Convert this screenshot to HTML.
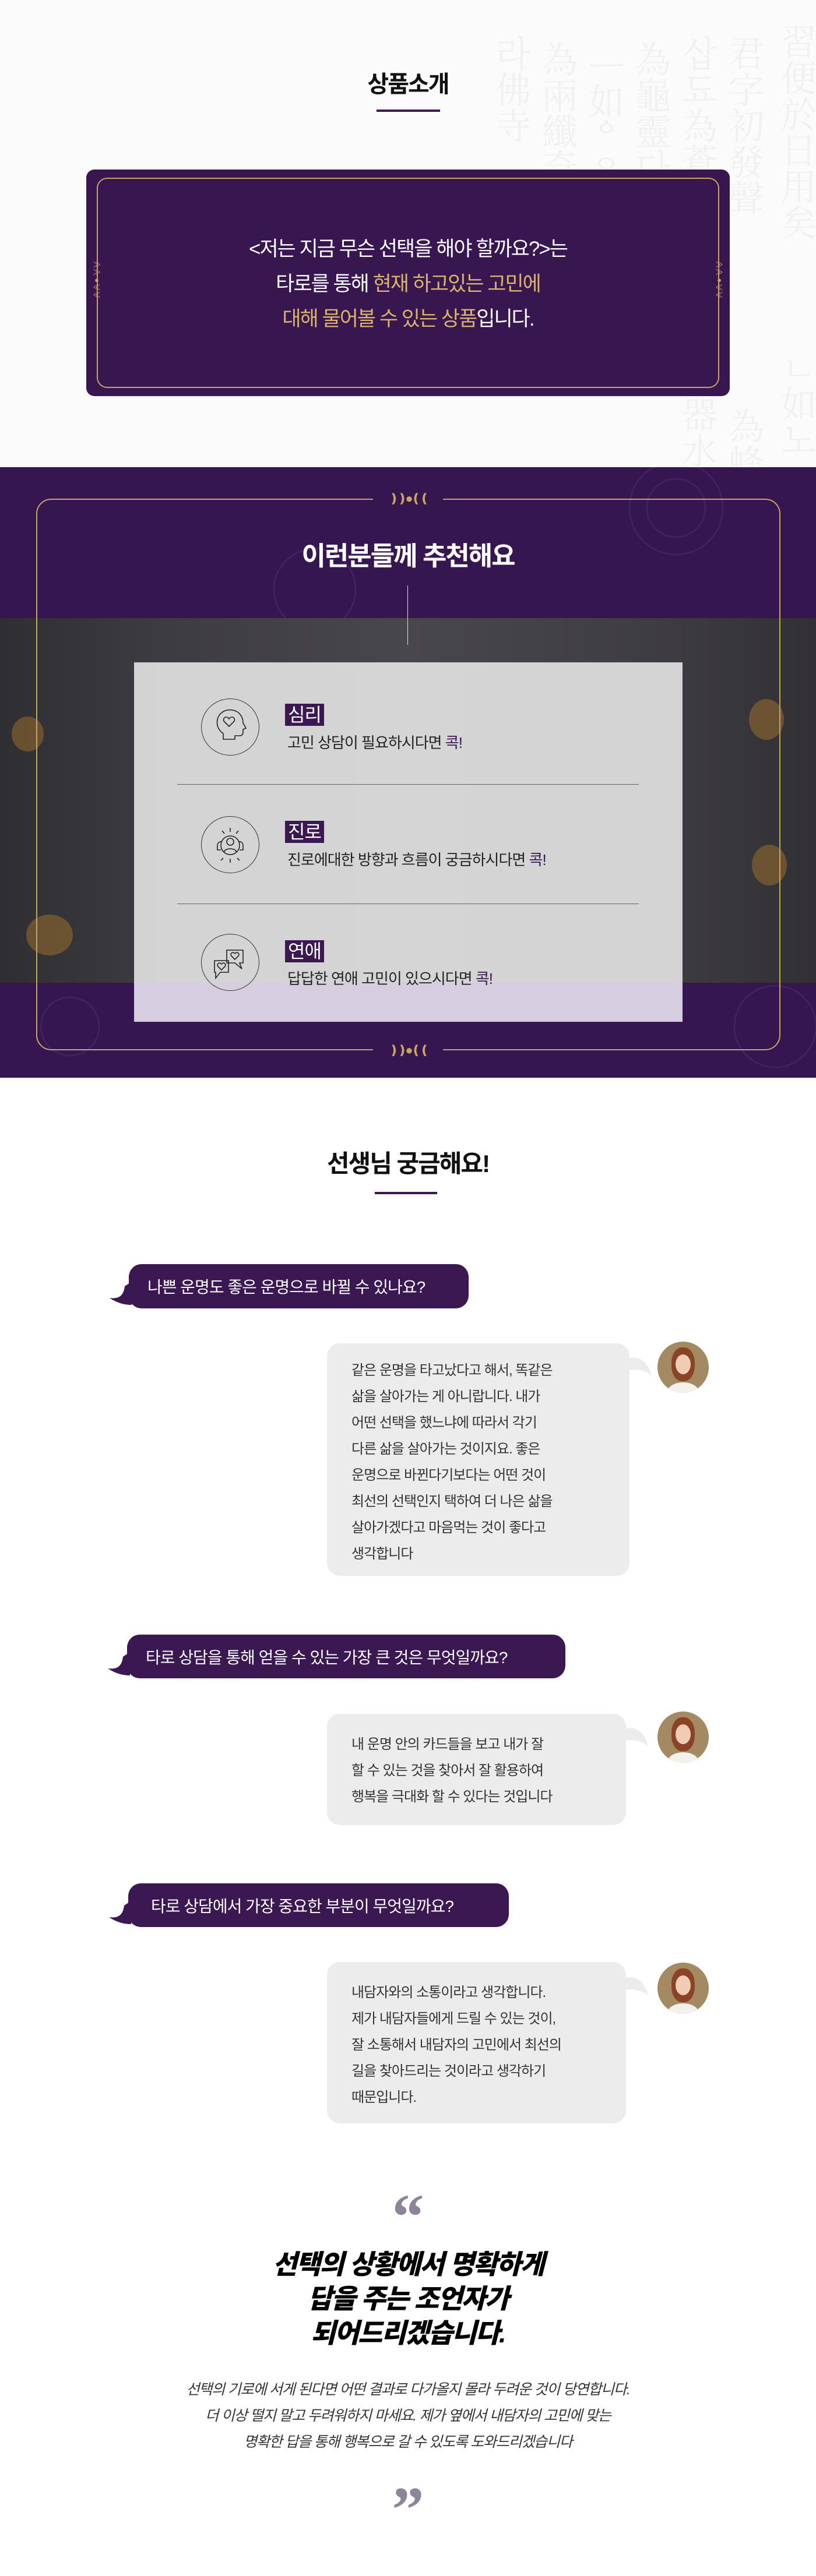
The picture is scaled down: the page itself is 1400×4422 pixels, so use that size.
<!DOCTYPE html>
<html><head><meta charset="utf-8">
<style>
*{margin:0;padding:0;box-sizing:border-box}
body{width:1400px;height:4422px;position:relative;background:#fff;font-family:"Liberation Sans","Noto Sans CJK KR",sans-serif;overflow:hidden}
.a{position:absolute}
.c{text-align:center}
.wm{position:absolute;color:#f1f1f1;font-family:"Noto Serif CJK SC",serif;font-size:62px;writing-mode:vertical-rl;line-height:80px}
.q{position:absolute;background:#3b1852;color:#fff;border-radius:22px;font-size:28px;display:flex;align-items:center;padding-left:32px;letter-spacing:-1px}
.ans{position:absolute;background:#ececec;border-radius:22px;color:#333;font-size:24px;line-height:45px;padding-left:42px;letter-spacing:-1px}
.av{position:absolute;width:88px;height:88px;border-radius:50%;background:#a38a62;overflow:hidden}
.av i{position:absolute;left:24px;top:10px;width:40px;height:58px;border-radius:45%;background:#8a4326}
.av b{position:absolute;left:31px;top:22px;width:26px;height:34px;border-radius:50%;background:#f0ccb5}
.av u{position:absolute;left:18px;top:70px;width:52px;height:30px;background:#f4f0ec;border-radius:50%}
.lab{position:absolute;background:#3b1852;color:#fff;font-size:32px;line-height:38px;height:38px;padding:0 5px;letter-spacing:-1px}
.desc{position:absolute;font-size:26px;color:#222;letter-spacing:-1px}
.desc b{color:#3b1852;font-weight:normal}
.ic{position:absolute;width:100px;height:98px;border:1.5px solid #333;border-radius:50%}
</style></head><body>

<!-- Section 1 -->
<div class="a" style="left:0;top:0;width:1400px;height:802px;background:#fbfbfb"></div>
<div class="wm" style="left:1330px;top:40px">習便於日用矣</div>
<div class="wm" style="left:1240px;top:60px">君字初發聲</div>
<div class="wm" style="left:1160px;top:60px">삽됴為蒼爲</div>
<div class="wm" style="left:1080px;top:70px">為龜靈다</div>
<div class="wm" style="left:1000px;top:80px">ᅳ如ᅌ을</div>
<div class="wm" style="left:920px;top:70px">為兩纖奇</div>
<div class="wm" style="left:840px;top:60px">라佛寺</div>
<div class="wm" style="left:1330px;top:600px">ㄴ如노</div>
<div class="wm" style="left:1240px;top:700px">為蜂</div>
<div class="wm" style="left:1160px;top:680px">器水</div>
<div class="a c" style="left:0;top:112px;width:1400px;font-size:40px;color:#111;letter-spacing:-2px;font-weight:bold">상품소개</div>
<div class="a" style="left:646px;top:188px;width:109px;height:4px;background:#3b1852"></div>
<div class="a" style="left:148px;top:291px;width:1104px;height:389px;background:#381650;border-radius:14px"></div>
<div class="a" style="left:166px;top:305px;width:1068px;height:361px;border:2px solid #c9a45c;border-radius:18px"></div>
<div class="a" style="left:159px;top:448px;width:14px;height:80px;color:#c9a45c;font-size:13px;line-height:13px;text-align:center">≫<br>≫<br>●<br>≪<br>≪</div>
<div class="a" style="left:1227px;top:448px;width:14px;height:80px;color:#c9a45c;font-size:13px;line-height:13px;text-align:center">≫<br>≫<br>●<br>≪<br>≪</div>
<div class="a c" style="left:148px;top:398px;width:1104px;font-size:35px;line-height:60px;color:#fff;letter-spacing:-2px">&lt;저는 지금 무슨 선택을 해야 할까요?&gt;는<br>타로를 통해 <span style="color:#d9b36a">현재 하고있는 고민에</span><br><span style="color:#d9b36a">대해 물어볼 수 있는 상품</span>입니다.</div>

<!-- Section 2 -->
<div class="a" style="left:0;top:802px;width:1400px;height:1048px;background:#361650"></div>
<svg class="a" style="left:0;top:802px" width="1400" height="1048">
<g fill="none" stroke="#43205e" stroke-width="3">
<circle cx="540" cy="210" r="70"/><circle cx="1160" cy="70" r="50"/><circle cx="1160" cy="70" r="80"/>
<circle cx="1330" cy="960" r="70"/><circle cx="120" cy="960" r="50"/>
</g></svg>
<div class="a" style="left:0;top:1061px;width:1400px;height:626px;background:linear-gradient(90deg,#2f2f33 0%,#3d3c40 20%,#48474b 50%,#3e3d41 80%,#313034 100%)"></div>
<div class="a" style="left:20px;top:1230px;width:55px;height:60px;border-radius:50%;background:#b07a2a;opacity:.45"></div>
<div class="a" style="left:1285px;top:1200px;width:60px;height:70px;border-radius:50%;background:#b07a2a;opacity:.45"></div>
<div class="a" style="left:1290px;top:1450px;width:60px;height:70px;border-radius:50%;background:#b07a2a;opacity:.45"></div>
<div class="a" style="left:45px;top:1570px;width:80px;height:70px;border-radius:50%;background:#b07a2a;opacity:.45"></div>
<div class="a" style="left:62px;top:856px;width:1277px;height:947px;border:2px solid #c9a45c;border-radius:26px"></div>
<div class="a c" style="left:640px;top:843px;width:120px;height:26px;background:#361650;color:#c9a45c;font-size:22px;line-height:26px;letter-spacing:-4px">❫❫●❪❪</div>
<div class="a c" style="left:640px;top:1790px;width:120px;height:26px;background:#361650;color:#c9a45c;font-size:22px;line-height:26px;letter-spacing:-4px">❫❫●❪❪</div>
<div class="a c" style="left:0;top:918px;width:1400px;font-size:45px;color:#fff;letter-spacing:-2px;font-weight:bold">이런분들께 추천해요</div>
<div class="a" style="left:699px;top:1005px;width:1px;height:102px;background:#ddd"></div>
<div class="a" style="left:230px;top:1137px;width:941px;height:550px;background:rgba(228,228,228,.9)"></div>
<div class="a" style="left:230px;top:1687px;width:941px;height:67px;background:#d6cde0"></div>
<div class="a" style="left:304px;top:1346px;width:792px;height:1px;background:#666"></div>
<div class="a" style="left:304px;top:1551px;width:792px;height:1px;background:#666"></div>

<div class="ic" style="left:345px;top:1199px"></div>
<svg class="a" style="left:345px;top:1199px" width="100" height="98" fill="none" stroke="#222" stroke-width="1.6">
<path d="M38 70 v-10 c-8-5-12-14-10-24 c3-12 14-18 26-16 c12 2 18 12 18 22 l5 9 l-5 2 v6 c0 3-3 5-6 5 h-8 v6 z"/>
<path d="M48 48 l-8-8 c-3-3-1-8 3-8 c2 0 4 1 5 3 c1-2 3-3 5-3 c4 0 6 5 3 8 z"/>
</svg>
<div class="lab" style="left:489px;top:1208px">심리</div>
<div class="desc" style="left:493px;top:1255px">고민 상담이 필요하시다면 <b>콕!</b></div>

<div class="ic" style="left:345px;top:1401px"></div>
<svg class="a" style="left:345px;top:1401px" width="100" height="98" fill="none" stroke="#222" stroke-width="1.6">
<circle cx="50" cy="50" r="16"/><circle cx="50" cy="44" r="6"/><path d="M39 62 c2-8 20-8 22 0"/>
<path d="M34 58 h-6 v-8 c0-5 5-7 8-6 M66 58 h6 v-8 c0-5-5-7-8-6"/>
<path d="M50 20 v7 M36 25 l4 5 M64 25 l-4 5 M50 73 v7 M38 72 l-4 4 M62 72 l4 4"/>
</svg>
<div class="lab" style="left:489px;top:1409px">진로</div>
<div class="desc" style="left:493px;top:1456px">진로에대한 방향과 흐름이 궁금하시다면 <b>콕!</b></div>

<div class="ic" style="left:345px;top:1603px"></div>
<svg class="a" style="left:345px;top:1603px" width="100" height="98" fill="none" stroke="#222" stroke-width="1.6">
<path d="M44 28 h28 v22 h-6 l4 10 l-12-10 h-14 z"/>
<path d="M23 46 h24 v20 h-14 l-8 10 v-10 h-2 z"/>
<path d="M58 44 l-6-6 c-2-3 0-6 3-6 c1 0 2 1 3 2 c1-1 2-2 3-2 c3 0 5 3 3 6 z"/>
<path d="M35 62 l-6-6 c-2-3 0-6 3-6 c1 0 2 1 3 2 c1-1 2-2 3-2 c3 0 5 3 3 6 z"/>
</svg>
<div class="lab" style="left:489px;top:1614px">연애</div>
<div class="desc" style="left:493px;top:1660px">답답한 연애 고민이 있으시다면 <b>콕!</b></div>

<!-- Section 3 -->
<div class="a c" style="left:0;top:1964px;width:1400px;font-size:42px;color:#111;letter-spacing:-2px;font-weight:bold">선생님 궁금해요!</div>
<div class="a" style="left:643px;top:2046px;width:107px;height:4px;background:#3b1852"></div>

<svg class="a" style="left:186px;top:2200px" width="40" height="40"><path d="M40 0 v40 c-14 0-26-4-38-12 c14 2 24-2 26-20 z" fill="#3b1852"/></svg>
<div class="q" style="left:221px;top:2170px;width:583px;height:76px">나쁜 운명도 좋은 운명으로 바뀔 수 있나요?</div>
<div class="ans" style="left:561px;top:2306px;width:519px;height:399px;padding-top:24px">같은 운명을 타고났다고 해서, 똑같은<br>삶을 살아가는 게 아니랍니다. 내가<br>어떤 선택을 했느냐에 따라서 각기<br>다른 삶을 살아가는 것이지요. 좋은<br>운명으로 바뀐다기보다는 어떤 것이<br>최선의 선택인지 택하여 더 나은 삶을<br>살아가겠다고 마음먹는 것이 좋다고<br>생각합니다</div>
<svg class="a" style="left:1076px;top:2328px" width="44" height="40"><path d="M0 4 c20-6 36 4 42 30 c-10-10-24-12-42-10 z" fill="#ececec"/></svg>
<div class="av" style="left:1128px;top:2303px"><i></i><b></b><u></u></div>

<svg class="a" style="left:183px;top:2836px" width="40" height="40"><path d="M40 0 v40 c-14 0-26-4-38-12 c14 2 24-2 26-20 z" fill="#3b1852"/></svg>
<div class="q" style="left:218px;top:2806px;width:752px;height:75px">타로 상담을 통해 얻을 수 있는 가장 큰 것은 무엇일까요?</div>

<div class="ans" style="left:561px;top:2942px;width:513px;height:191px;padding-top:30px">내 운명 안의 카드들을 보고 내가 잘<br>할 수 있는 것을 찾아서 잘 활용하여<br>행복을 극대화 할 수 있다는 것입니다</div>
<svg class="a" style="left:1070px;top:2964px" width="44" height="40"><path d="M0 4 c20-6 36 4 42 30 c-10-10-24-12-42-10 z" fill="#ececec"/></svg>
<div class="av" style="left:1128px;top:2938px"><i></i><b></b><u></u></div>

<svg class="a" style="left:185px;top:3263px" width="40" height="40"><path d="M40 0 v40 c-14 0-26-4-38-12 c14 2 24-2 26-20 z" fill="#3b1852"/></svg>
<div class="q" style="left:220px;top:3233px;width:653px;height:75px;padding-left:39px">타로 상담에서 가장 중요한 부분이 무엇일까요?</div>

<div class="ans" style="left:561px;top:3368px;width:513px;height:277px;padding-top:30px">내담자와의 소통이라고 생각합니다.<br>제가 내담자들에게 드릴 수 있는 것이,<br>잘 소통해서 내담자의 고민에서 최선의<br>길을 찾아드리는 것이라고 생각하기<br>때문입니다.</div>
<svg class="a" style="left:1070px;top:3392px" width="44" height="40"><path d="M0 4 c20-6 36 4 42 30 c-10-10-24-12-42-10 z" fill="#ececec"/></svg>
<div class="av" style="left:1128px;top:3369px"><i></i><b></b><u></u></div>

<!-- Section 4 -->
<div class="a c" style="left:0;top:3755px;width:1400px;font-size:110px;line-height:100px;color:#8e8399;font-family:'Liberation Serif',serif;font-weight:bold">“</div>
<div class="a c" style="left:0;top:3858px;width:1400px;font-size:46px;line-height:59px;color:#000;font-weight:900;letter-spacing:-2px;font-style:italic">선택의 상황에서 명확하게<br>답을 주는 조언자가<br>되어드리겠습니다.</div>
<div class="a c" style="left:0;top:4080px;width:1400px;font-size:25px;line-height:45px;color:#333;font-style:italic;letter-spacing:-1.2px">선택의 기로에 서게 된다면 어떤 결과로 다가올지 몰라 두려운 것이 당연합니다.<br>더 이상 떨지 말고 두려워하지 마세요. 제가 옆에서 내담자의 고민에 맞는<br>명확한 답을 통해 행복으로 갈 수 있도록 도와드리겠습니다</div>
<div class="a c" style="left:0;top:4258px;width:1400px;font-size:110px;line-height:100px;color:#8e8399;font-family:'Liberation Serif',serif;font-weight:bold">”</div>
</body></html>
